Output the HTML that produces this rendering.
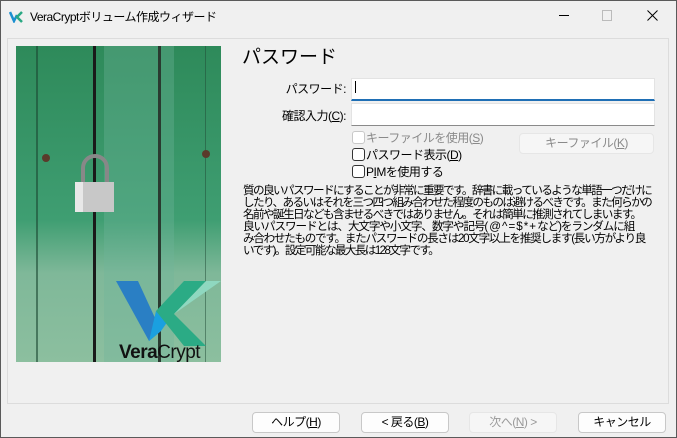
<!DOCTYPE html>
<html><head><meta charset="utf-8"><style>
body{margin:0;width:677px;height:438px;background:#f0f0f0;position:relative;overflow:hidden;font-family:"Liberation Sans","Noto Sans CJK JP",sans-serif;font-size:12px;color:#000}
.a{position:absolute}
.frame{left:0;top:0;width:675px;height:436px;border:1px solid #5a5a5a}
.grp{left:7px;top:38px;width:660px;height:364px;border:1px solid #dcdcdc}
.in{background:#fff;border:1px solid #e3e3e3;border-bottom:1px solid #8a8a8a;height:21px}
.cb{width:11px;height:11px;border:1px solid #333;border-radius:3px;background:#fff}
.btn{height:19px;border:1px solid #c8c8c8;border-radius:4px;background:#fdfdfd;text-align:center;line-height:19px;font-size:12px;letter-spacing:-0.5px}
.lbl{width:110px;text-align:right;letter-spacing:-0.5px}
.t div{white-space:nowrap;height:12px;line-height:12px}
</style></head><body>
<div class="a frame"></div>
<svg class="a" style="left:9px;top:11px" width="14" height="12"><path d="M1 1 L5 10 L8 4" stroke="#1a8fd0" stroke-width="2.5" fill="none"/><path d="M13 1 L8 6 L13 11" stroke="#2aa883" stroke-width="2.5" fill="none"/></svg>
<div class="a" style="left:30px;top:8px;font-size:12px;letter-spacing:-0.5px">VeraCryptボリューム作成ウィザード</div>
<div class="a" style="left:559px;top:15px;width:10px;height:1px;background:#000"></div>
<div class="a" style="left:602px;top:10px;width:8px;height:9px;border:1px solid #bbb"></div>
<svg class="a" style="left:647px;top:10px" width="11" height="11"><path d="M0.5 0.5L10.5 10.5M10.5 0.5L0.5 10.5" stroke="#000"/></svg>
<div class="a grp"></div>
<svg class="a" style="left:16px;top:46px" width="205" height="316">
<defs><linearGradient id="g" x1="0" y1="0" x2="0" y2="1"><stop offset="0" stop-color="#2e8a5a"/><stop offset="0.55" stop-color="#3f9e72"/><stop offset="0.72" stop-color="#7fb899"/><stop offset="1" stop-color="#8cbf9f"/></linearGradient></defs>
<rect width="205" height="316" fill="url(#g)"/>
<rect x="88" width="70" height="316" fill="#6fb59a" opacity="0.35"/>
<rect x="20" width="2" height="316" fill="#1d4a33" opacity="0.6"/>
<rect x="77" width="3" height="316" fill="#1a1a1a"/>
<rect x="142" width="3" height="316" fill="#2a3a30"/>
<rect x="189" width="1" height="316" fill="#204a35" opacity="0.5"/>
<circle cx="30" cy="112" r="4" fill="#5a3a2a"/><circle cx="190" cy="108" r="4" fill="#5a3a2a"/>
<path d="M67 140 v-18 a12 12 0 0 1 24 0 v18" stroke="#888" stroke-width="4" fill="none"/>
<rect x="59" y="136" width="39" height="30" fill="#c8c8c8"/>
<rect x="59" y="136" width="8" height="30" fill="#e8e8e8"/>
<path d="M100 235 L122 235 L145 285 L133 295 Z" fill="#2a7fc4"/>
<path d="M133 295 L145 285 L152 275 L140 265 Z" fill="#1aa0e0"/>
<path d="M140 265 L168 235 L190 235 L158 268 L190 300 L168 300 Z" fill="#2bab85"/>
<path d="M158 268 L190 235 L205 235 Z" fill="#8fd8c0"/>
<text x="103" y="312" font-family="Liberation Sans" font-size="19" fill="#111" letter-spacing="-0.5"><tspan font-weight="bold">Vera</tspan>Crypt</text>
</svg>
<div class="a" style="left:242px;top:42px;font-size:19px">パスワード</div>
<div class="a lbl" style="left:236px;top:80px">パスワード:</div>
<div class="a in" style="left:351px;top:78px;width:302px;border-bottom:2px solid #1f6fb5;height:20px"></div>
<div class="a" style="left:355px;top:81px;width:1px;height:12px;background:#000"></div>
<div class="a lbl" style="left:236px;top:107px">確認入力(<u>C</u>):</div>
<div class="a in" style="left:351px;top:103px;width:302px"></div>
<div class="a cb" style="left:352px;top:131px;border-color:#c8c8c8"></div>
<div class="a" style="left:366px;top:129px;color:#8a8a8a;letter-spacing:-0.5px">キーファイルを使用(<u>S</u>)</div>
<div class="a btn" style="left:519px;top:133px;width:133px;border-color:#e6e6e6;background:#f6f6f6;color:#8a8a8a">キーファイル(<u>K</u>)</div>
<div class="a cb" style="left:352px;top:148px"></div>
<div class="a" style="left:366px;top:146px;letter-spacing:-0.5px">パスワード表示(<u>D</u>)</div>
<div class="a cb" style="left:352px;top:165px"></div>
<div class="a" style="left:366px;top:163px;letter-spacing:-0.5px">P<u>I</u>Mを使用する</div>
<div class="a t" style="left:243px;top:185px;font-size:11.6px;letter-spacing:-1.6px">
<div>質の良いパスワードにすることが非常に重要です。辞書に載っているような単語一つだけに</div>
<div>したり、あるいはそれを三つ四つ組み合わせた程度のものは避けるべきです。また何らかの</div>
<div>名前や誕生日なども含ませるべきではありません。それは簡単に推測されてしまいます。</div>
<div style="letter-spacing:-1.1px">良いパスワードとは、大文字や小文字、数字や記号( @ ^ = $ * + など)をランダムに組</div>
<div style="letter-spacing:-1.3px">み合わせたものです。またパスワードの長さは20文字以上を推奨します(長い方がより良</div>
<div>いです)。設定可能な最大長は128文字です。</div>
</div>
<div class="a btn" style="left:252px;top:412px;width:86px">ヘルプ(<u>H</u>)</div>
<div class="a btn" style="left:361px;top:412px;width:86px">&lt; 戻る(<u>B</u>)</div>
<div class="a btn" style="left:469px;top:412px;width:86px;border-color:#e6e6e6;background:#f6f6f6;color:#9a9a9a">次へ(<u>N</u>) &gt;</div>
<div class="a btn" style="left:578px;top:412px;width:86px">キャンセル</div>
</body></html>
